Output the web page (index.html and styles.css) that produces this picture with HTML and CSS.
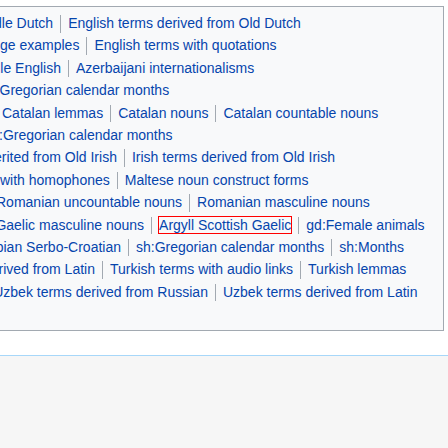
FILE: index.html
```html
<!DOCTYPE html>
<html lang="en">
<head>
<meta charset="utf-8">
<title>Categories</title>
<link rel="stylesheet" href="styles.css">
</head>
<body>
<div class="content">
  <div class="catlinks">
    <div class="line l1"><span class="item"><a href="#">dle Dutch</a></span><span class="item"><a href="#">English terms derived from Old Dutch</a></span></div>
    <div class="line l2"><span class="item"><a href="#">ge examples</a></span><span class="item"><a href="#">English terms with quotations</a></span></div>
    <div class="line l3"><span class="item"><a href="#">dle English</a></span><span class="item"><a href="#">Azerbaijani internationalisms</a></span></div>
    <div class="line l4"><span class="item"><a href="#">Gregorian calendar months</a></span></div>
    <div class="line l5"><span class="item"><a href="#">Catalan lemmas</a></span><span class="item"><a href="#">Catalan nouns</a></span><span class="item"><a href="#">Catalan countable nouns</a></span></div>
    <div class="line l6"><span class="item"><a href="#">:Gregorian calendar months</a></span></div>
    <div class="line l7"><span class="item"><a href="#">erited from Old Irish</a></span><span class="item"><a href="#">Irish terms derived from Old Irish</a></span></div>
    <div class="line l8"><span class="item"><a href="#">with homophones</a></span><span class="item"><a href="#">Maltese noun construct forms</a></span></div>
    <div class="line l9"><span class="item"><a href="#">Romanian uncountable nouns</a></span><span class="item"><a href="#">Romanian masculine nouns</a></span></div>
    <div class="line l10"><span class="item"><a href="#">Gaelic masculine nouns</a></span><span class="item"><a href="#" class="focus">Argyll Scottish Gaelic</a></span><span class="item"><a href="#">gd:Female animals</a></span></div>
    <div class="line l11"><span class="item"><a href="#">bian Serbo-Croatian</a></span><span class="item"><a href="#">sh:Gregorian calendar months</a></span><span class="item"><a href="#">sh:Months</a></span></div>
    <div class="line l12"><span class="item"><a href="#">rived from Latin</a></span><span class="item"><a href="#">Turkish terms with audio links</a></span><span class="item"><a href="#">Turkish lemmas</a></span></div>
    <div class="line l13"><span class="item"><a href="#">Uzbek terms derived from Russian</a></span><span class="item"><a href="#">Uzbek terms derived from Latin</a></span></div>
    <div class="line"></div>
  </div>
</div>
</body>
</html>
```
FILE: styles.css
```css
html, body {
  margin: 0;
  padding: 0;
  background: #f6f6f6;
  overflow: hidden;
}
body {
  font-family: "Liberation Sans", Arial, sans-serif;
  font-size: 14px;
  color: #202122;
}
.content {
  background: #ffffff;
  padding: 6px 4px 24px 0;
  border-bottom: 1px solid #a7d7f9;
}
.catlinks {
  margin-left: -6px;
  padding: 5px;
  background: #f8f9fa;
  border: 1px solid #a2a9b1;
  line-height: 22.4px;
}
.line {
  height: 22.4px;
  white-space: nowrap;
  overflow: visible;
}
.item {
  display: inline-block;
  line-height: 17.5px;
  margin: 1.75px 0;
  padding: 0 7px;
  border-left: 1px solid #a2a9b1;
}
.item:first-child {
  border-left: 0;
  padding-left: 0;
}
.item a {
  color: #0645ad;
  text-decoration: none;
}
.item a.focus {
  outline: 1px solid #ff0000;
}
.l1 .item:first-child { margin-left: -6px; }
.l2 .item:first-child { margin-left: 0; }
.l3 .item:first-child { margin-left: -7.5px; }
.l4 .item:first-child { margin-left: -0.5px; }
.l5 .item:first-child { margin-left: 2px; }
.l6 .item:first-child { margin-left: -1px; }
.l7 .item:first-child { margin-left: -6px; }
.l8 .item:first-child { margin-left: 0; }
.l9 .item:first-child { margin-left: -4px; }
.l10 .item:first-child { margin-left: -4.6px; }
.l11 .item:first-child { margin-left: -4.3px; }
.l12 .item:first-child { margin-left: -1.5px; }
.l13 .item:first-child { margin-left: -6.8px; }
```
